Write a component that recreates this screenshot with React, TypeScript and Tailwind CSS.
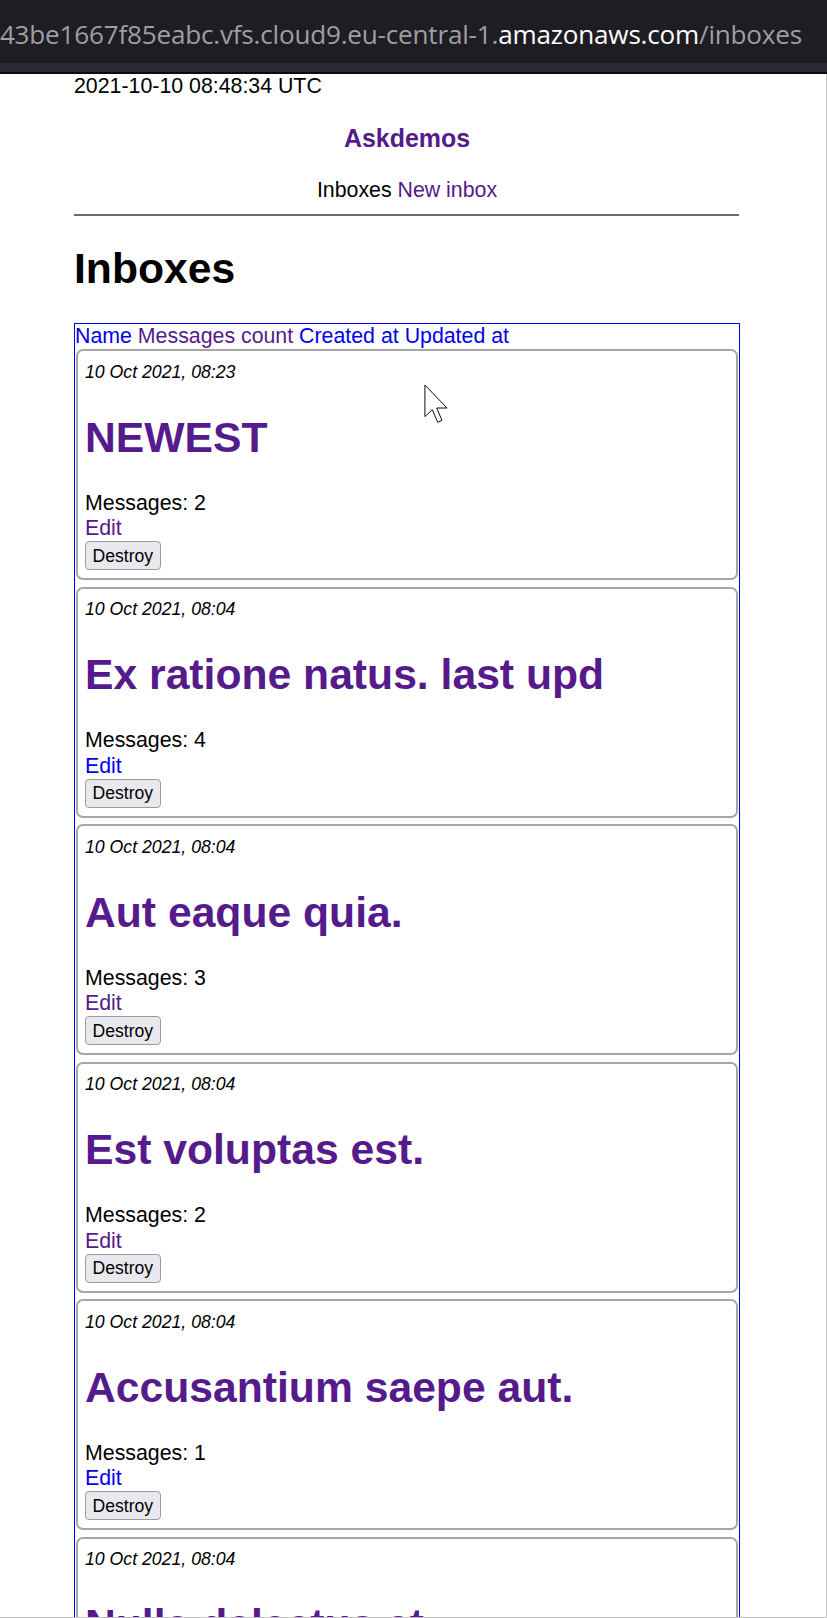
import React from "react";

const cards = [
  { date: "10 Oct 2021, 08:23", title: "NEWEST", count: 2, editVisited: true },
  { date: "10 Oct 2021, 08:04", title: "Ex ratione natus. last upd", count: 4, editVisited: false },
  { date: "10 Oct 2021, 08:04", title: "Aut eaque quia.", count: 3, editVisited: true },
  { date: "10 Oct 2021, 08:04", title: "Est voluptas est.", count: 2, editVisited: true },
  { date: "10 Oct 2021, 08:04", title: "Accusantium saepe aut.", count: 1, editVisited: false },
  { date: "10 Oct 2021, 08:04", title: "Nulla delectus et.", count: 1, editVisited: true },
];

function Card({ c }: { c: (typeof cards)[number] }) {
  return (
    <div className="ml-[1px] mb-[6.5px] w-[662px] h-[231px] rounded-[7px] border-2 border-[#a6a6a6] px-[7px] pt-[10.5px] bg-white">
      <div className="text-[17.7px] leading-[20.5px] italic text-black">{c.date}</div>
      <div className="mt-[30.2px] text-[42.67px] leading-[49px] font-bold text-[#551a8b] whitespace-nowrap">
        {c.title}
      </div>
      <div className="mt-[29.3px] text-[21.33px] leading-[24.5px] text-black">Messages: {c.count}</div>
      <div className={`mt-[1px] text-[21.33px] leading-[24.5px] ${c.editVisited ? "text-[#551a8b]" : "text-[#0000ee]"}`}>Edit</div>
      <div className="mt-[0.5px] flex">
        <div className="h-[29px] flex items-center px-[6.5px] rounded-[4px] border border-[#9a9aa6] bg-[#e9e9ed] text-[17.6px] text-black">
          Destroy
        </div>
      </div>
    </div>
  );
}

export default function App() {
  return (
    <div className="relative w-[827px] h-[1618px] overflow-hidden bg-white" style={{ fontFamily: '"Liberation Sans", Arial, sans-serif' }}>
      {/* browser chrome */}
      <div className="h-[63px] bg-[#1e1d23] flex items-center justify-end pr-[25px] pt-[6px] overflow-hidden">
        <div className="whitespace-nowrap text-[26.1px] text-[#9e9ea3] tracking-[-0.2px]" style={{ fontFamily: '"Open Sans", "Noto Sans", sans-serif' }}>
          43be1667f85eabc.vfs.cloud9.eu-central-1.<span className="text-white">amazonaws.com</span>/inboxes
        </div>
      </div>
      <div className="h-[9px] bg-[#2b2a33]" />
      <div className="h-[2px] bg-[#0b0b0d]" />

      <div className="flex">
        <div className="ml-[74px] w-[666px]">
          <div className="text-[21.33px] leading-[24.5px] text-black">2021-10-10 08:48:34 UTC</div>
          <div className="mt-[25.4px] text-center text-[24.96px] leading-[28.7px] font-bold text-[#551a8b]">Askdemos</div>
          <div className="mt-[25.4px] text-center text-[21.33px] leading-[24.5px]">
            <span className="text-black">Inboxes</span> <span className="text-[#551a8b]">New inbox</span>
          </div>
          <div className="mt-[12px] h-[2px] w-[665px] bg-[#6b6b6b]" />
          <div className="mt-[27.5px] text-[42.67px] leading-[49px] font-bold text-black">Inboxes</div>
          <div className="mt-[30.5px] border border-[#0000ff] pb-[4px]">
            <div className="text-[21.33px] leading-[24.5px] whitespace-nowrap">
              <span className="text-[#0000ee]">Name</span> <span className="text-[#551a8b]">Messages count</span>{" "}
              <span className="text-[#0000ee]">Created at</span> <span className="text-[#0000ee]">Updated at</span>
            </div>
            <div className="mt-[0.5px]">
              {cards.map((c, i) => (
                <Card key={i} c={c} />
              ))}
            </div>
          </div>
        </div>
      </div>

      {/* frame edges */}
      <div className="absolute right-0 top-[74px] bottom-0 w-[1px] bg-[#c4c4c4]" />
      <div className="absolute left-0 right-0 bottom-0 h-[1px] bg-[#c4c4c4]" />

      {/* mouse cursor */}
      <svg className="absolute left-[423px] top-[384px]" width="27" height="40" viewBox="0 0 12 19">
        <path d="M0.5 0.5 L0.5 15.5 L4 12.2 L6.6 18.2 L8.6 17.3 L6.1 11.4 L11 11.4 Z" fill="white" stroke="black" strokeWidth="0.45" strokeLinejoin="miter" />
      </svg>
    </div>
  );
}
